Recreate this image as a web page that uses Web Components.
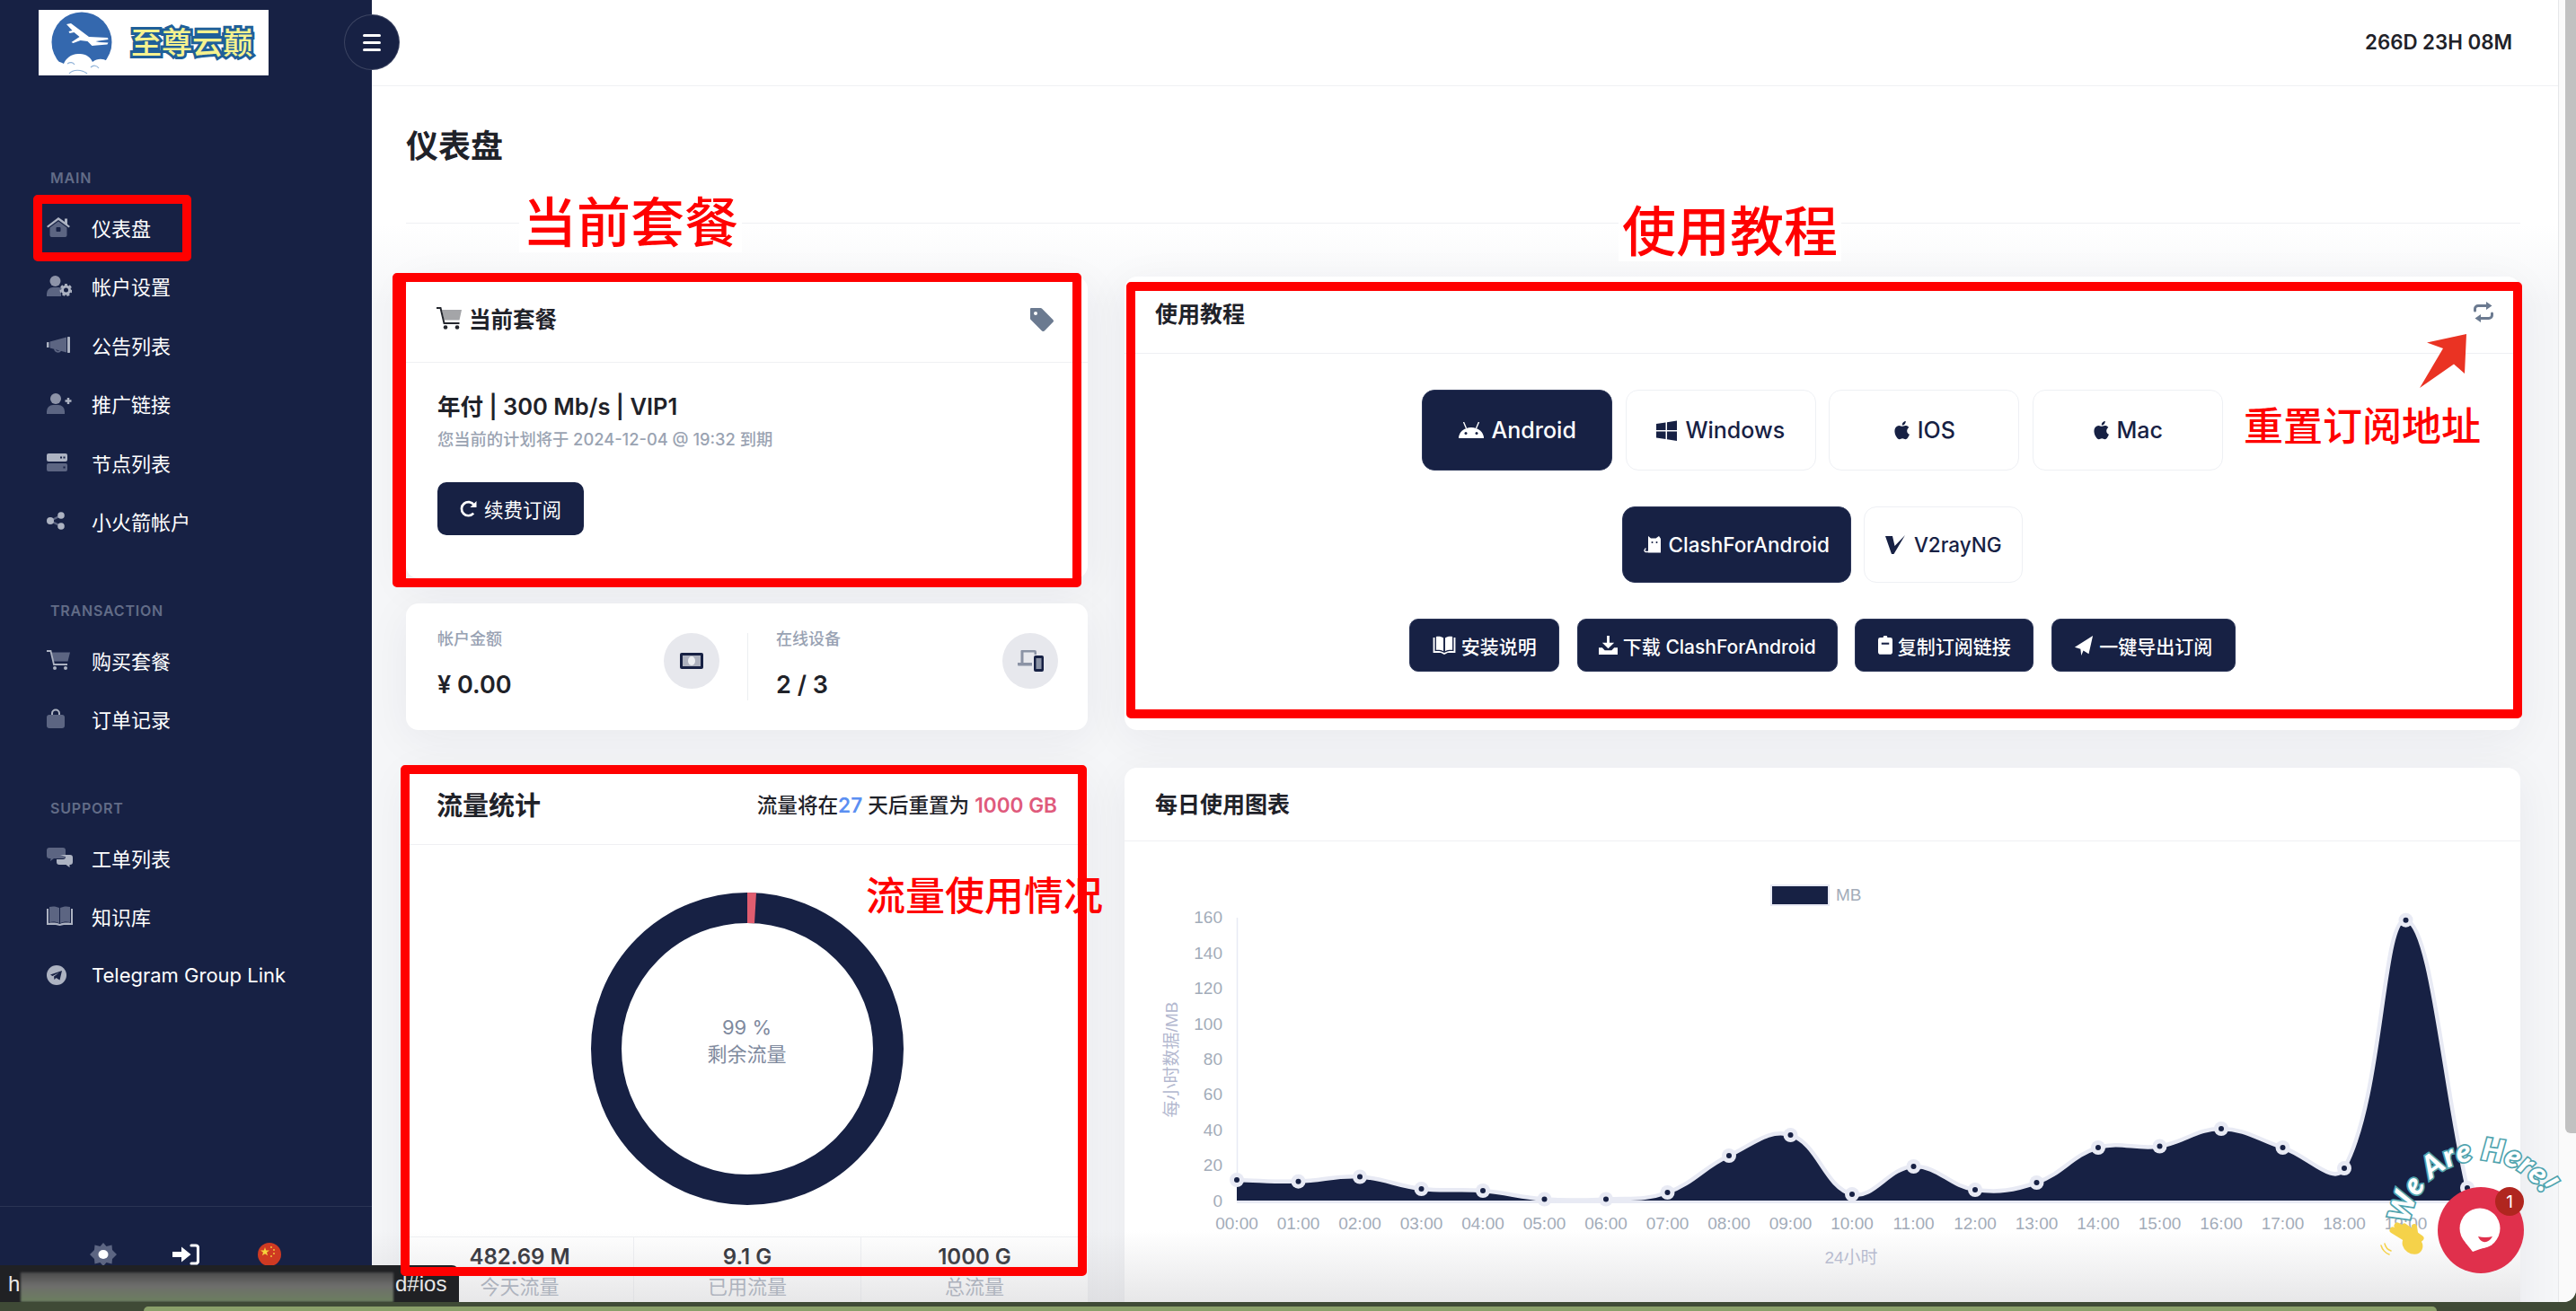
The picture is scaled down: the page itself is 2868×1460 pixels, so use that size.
<!DOCTYPE html>
<html lang="zh">
<head>
<meta charset="utf-8">
<title>仪表盘</title>
<style>
  html, body { margin: 0; height: 100%; overflow: hidden; }
  body {
    background: #3f4a36;
    color: #1f2229;
    font-family: Inter, "Noto Sans CJK SC", sans-serif;
  }
</style>
</head>
<body>
<app-window></app-window>
<script>
const NAVY = '#172144';
const LIGHT = '#adb3c2';
const DARK = '#5c6582';

// every icon: [width, height, viewBox, markup]
const ICONS = {
  home: [26, 22, '0 0 26 22', `<path fill="${LIGHT}" d="M13 0l7 5V1.500h3v6.200l3 2.400-1.500 1.500L13 3 1.500 11.600 0 10.100z"/><path fill="${DARK}" d="M3.500 11.500L13 4.500l9.500 7V20a2 2 0 0 1-2 2h-15a2 2 0 0 1-2-2z"/><rect x="10.500" y="11" width="5" height="5" rx="1" fill="${NAVY}"/>`],
  usercog: [28, 23, '0 0 28 23', `<circle cx="9.500" cy="6" r="6" fill="#8d93a8"/><path fill="${DARK}" d="M0 23v-3a7 7 0 0 1 7-7h6a7 7 0 0 1 3 .7V23z"/><circle cx="21.500" cy="16" r="4" fill="none" stroke="${LIGHT}" stroke-width="3"/><circle cx="21.500" cy="16" r="6" fill="none" stroke="${LIGHT}" stroke-width="2" stroke-dasharray="3 2.200"/>`],
  bullhorn: [26, 18, '0 0 26 18', `<rect y="6" width="2.500" height="6" rx=".6" fill="${LIGHT}"/><path fill="${DARK}" d="M3.500 5.500L22 .5v17l-18.500-5z"/><path fill="none" stroke="${DARK}" stroke-width="1.800" d="M9 13.500a3.500 3.500 0 0 0 6.500 1.500"/><rect x="23" width="3" height="18" rx=".8" fill="${LIGHT}"/>`],
  userplus: [28, 23, '0 0 28 23', `<circle cx="10" cy="6" r="6" fill="#8d93a8"/><path fill="${DARK}" d="M0 23v-3a7 7 0 0 1 7-7h6a7 7 0 0 1 7 7v3z"/><path stroke="${LIGHT}" stroke-width="2.500" d="M24 5v7M20.500 8.500h7"/>`],
  server: [23, 20, '0 0 23 20', `<rect width="23" height="9" rx="2" fill="${LIGHT}"/><rect y="11" width="23" height="9" rx="2" fill="${DARK}"/><rect x="15" y="3.500" width="2" height="2" fill="${NAVY}"/><rect x="18.500" y="3.500" width="2" height="2" fill="${NAVY}"/><rect x="18.500" y="14.500" width="2" height="2" fill="${NAVY}"/>`],
  nodes: [20, 20, '0 0 20 20', `<path stroke="${DARK}" stroke-width="2" d="M4 10l12-6M4 10l12 6"/><circle cx="4" cy="10" r="4" fill="${LIGHT}"/><circle cx="16" cy="4" r="3.800" fill="${LIGHT}"/><circle cx="16" cy="16" r="3.800" fill="${LIGHT}"/>`],
  cart: [26, 22, '0 0 26 22', `<path fill="${DARK}" d="M5.500 2.500H26l-2.500 10H7.500z"/><path fill="none" stroke="${LIGHT}" stroke-width="1.800" d="M0 1h4.500l3.500 15h15"/><circle cx="9" cy="20" r="2" fill="${LIGHT}"/><circle cx="21" cy="20" r="2" fill="${LIGHT}"/>`],
  bag: [20, 22, '0 0 20 22', `<path fill="none" stroke="${LIGHT}" stroke-width="2" d="M6 8V5.500a4 4 0 0 1 8 0V8"/><rect y="7" width="20" height="15" rx="3" fill="${DARK}"/>`],
  comments: [29, 22, '0 0 29 22', `<path fill="${DARK}" d="M3 0h15a3 3 0 0 1 3 3v6a3 3 0 0 1-3 3H8l-4 3 .5-3H3a3 3 0 0 1-3-3V3a3 3 0 0 1 3-3z"/><path fill="${LIGHT}" d="M15 8h11a3 3 0 0 1 3 3v5a3 3 0 0 1-3 3h-.500v3l-4-3H14a3 3 0 0 1-3-3v-3h7a3 3 0 0 0 3-3z"/>`],
  book: [29, 22, '0 0 29 22', `<path fill="${DARK}" d="M3 1c4-1 8-.5 11 1v17c-3-1.500-7-2-11-1zM15 2c3-1.500 7-2 11-1v17c-4-1-8-.5-11 1z"/><path fill="${LIGHT}" d="M0 3h2v16c4-.8 9-.5 12.500 1C18 18.500 23 18.200 27 19V3h2v18h-10l-4.500 1-4.500-1H0z"/>`],
  telegram: [22, 22, '0 0 22 22', `<circle cx="11" cy="11" r="11" fill="${LIGHT}"/><path fill="${NAVY}" d="M4 10.500L17 6l-2.500 10.500-4-2.500-2 2-.5-3.500 6-4.500-7.500 4z"/>`],
  sun: [30, 26, '0 0 30 26', `<path fill="${DARK}" d="M15 0l3.500 4 6-1.500.5 5.500 5 5-5 5-.5 5.500-6-1.500L15 26l-3.500-4-6 1.500L5 18l-5-5 5-5 .5-5.500 6 1.500z"/><ellipse cx="15" cy="13" rx="5.500" ry="5" fill="#fff"/>`],
  login: [30, 24, '0 0 30 24', `<path fill="#fff" d="M0 9h10V3.500L20.500 12 10 20.500V15H0a1 1 0 0 1 0-6z" /><path fill="none" stroke="#fff" stroke-width="3.200" stroke-linecap="round" d="M21 2h5a2.500 2.500 0 0 1 2.500 2.500v15A2.500 2.500 0 0 1 26 22h-5"/>`],
  flag: [26, 26, '0 0 26 26', `<circle cx="13" cy="13" r="13" fill="#cf3a22"/><path fill="#f5d23c" d="M8 5l1.200 3.600H13l-3 2.200 1.100 3.500L8 12.200l-3.100 2.100L6 10.800 3 8.600h3.800z"/><circle cx="15" cy="5" r=".9" fill="#f5d23c"/><circle cx="18" cy="8" r=".9" fill="#f5d23c"/><circle cx="18" cy="12" r=".9" fill="#f5d23c"/><circle cx="15" cy="15" r=".9" fill="#f5d23c"/>`],
  headcart: [28, 25, '0 0 28 25', `<path fill="#a4a5a8" d="M6 3h22l-2.500 11.500H8.500z"/><path fill="none" stroke="#24272e" stroke-width="2" d="M0 1h4.500l4 17h17"/><circle cx="10" cy="22.500" r="2.300" fill="#24272e"/><circle cx="23" cy="22.500" r="2.300" fill="#24272e"/>`],
  tag: [26, 26, '0 0 26 26', `<path fill="#6b7a90" d="M1 0h10.500a2 2 0 0 1 1.400.6l12.400 12.400a2 2 0 0 1 0 2.800L15.800 25.400a2 2 0 0 1-2.800 0L.6 13A2 2 0 0 1 0 11.500V1a1 1 0 0 1 1-1z"/><circle cx="6" cy="6" r="2" fill="#fff"/>`],
  redo: [19, 19, '0 0 20 20', `<path fill="none" stroke="#fff" stroke-width="2.800" d="M16 15.500a8 8 0 1 1 .5-10"/><path fill="#fff" d="M19.500 1v7.500H12z"/>`],
  money: [26, 18, '0 0 26 18', `<rect width="26" height="18" rx="2" fill="${NAVY}"/><rect x="3" y="3" width="20" height="12" fill="#aeb2bf"/><ellipse cx="13" cy="9" rx="4" ry="5" fill="#eceef2"/>`],
  devices: [29, 24, '0 0 29 24', `<path fill="#8b93a5" d="M4 0h15a2 2 0 0 1 2 2v3h-2.500V2.500h-12V14H16v3.500H1a1 1 0 0 1-1-1V14h3.500V2A2 2 0 0 1 4 0z"/><rect x="18" y="6" width="11" height="18" rx="2" fill="${NAVY}"/><rect x="20.500" y="9" width="6" height="12" fill="#8b93a5"/>`],
  sync: [22, 23, '0 0 22 23', `<path fill="none" stroke="#6b7a90" stroke-width="3" stroke-linecap="round" d="M1.500 10V8A3.500 3.500 0 0 1 5 4.500h10M20.500 13v2a3.500 3.500 0 0 1-3.500 3.500H7"/><path fill="#6b7a90" d="M14 0l6.500 4.500L14 9zM8 14l-6.500 4.500L8 23z"/>`],
  android: [28, 18, '0 0 28 18', `<path fill="#fff" d="M0 18a14 12 0 0 1 28 0z"/><circle cx="8" cy="12.500" r="1.500" fill="${NAVY}"/><circle cx="20" cy="12.500" r="1.500" fill="${NAVY}"/><path stroke="#fff" stroke-width="1.400" d="M5.500 0l3 7M22.500 0l-3 7"/>`],
  windows: [23, 23, '0 0 23 23', `<path fill="${NAVY}" d="M0 4l10.500-1.500V11H0zM12 2.300L23 .5V11H12zM0 12.500h10.500V21L0 19.500zM12 12.500h11V23l-11-1.800z"/>`],
  apple: [18, 23, '3.500 1.500 18 21.500', `<path fill="${NAVY}" d="M18.700 12.600c0-2.600 2.100-3.800 2.200-3.900-1.200-1.800-3.100-2-3.700-2-1.600-.2-3.100.9-3.900.9-.8 0-2-.9-3.300-.9-1.700 0-3.300 1-4.200 2.500-1.800 3.100-.5 7.700 1.300 10.200.9 1.200 1.900 2.600 3.200 2.500 1.300 0 1.800-.8 3.300-.8 1.600 0 2 .8 3.300.8 1.400 0 2.300-1.200 3.100-2.500 1-1.400 1.400-2.800 1.400-2.900-.1 0-2.700-1-2.700-4zM16.200 5c.7-.9 1.200-2 1-3.200-1 0-2.200.7-2.900 1.500-.6.700-1.200 1.900-1 3 1.100.1 2.200-.5 2.900-1.300z"/>`],
  cat: [19, 19, '0 0 19 19', `<path fill="#fff" d="M5 3V0l3 2.500h5.500L17 0l2 3v15.500H5z"/><path fill="none" stroke="#fff" stroke-width="1.300" d="M5 17.500H2.500a1.500 1.500 0 0 1-1.200-2.400l1-1.600"/><circle cx="9.500" cy="7" r="1" fill="${NAVY}"/><circle cx="14.500" cy="7" r="1" fill="${NAVY}"/>`],
  v2ray: [23, 22, '0 0 23 22', `<path fill="${NAVY}" d="M0 1h8l2.500 11L22 0 9.500 21H7z"/>`],
  openbook: [26, 21, '0 0 26 22', `<path fill="#fff" d="M0 2h2v16c4-.5 8 0 11 2 3-2 7-2.500 11-2V2h2v18h-9l-4 2-4-2H0zM3.500 1C7 .5 10 1 12 2.500v15.500C10 16.800 7 16.300 3.500 16.500zM22.500 1C19 .5 16 1 14 2.500v15.500c2-1.200 5-1.700 8.500-1.500z"/>`],
  download: [21, 21, '0 0 22 22', `<path fill="#fff" d="M9.500 0h3v8H18l-7 7-7-7h5.500zM0 14h4l3 3h8l3-3h4v8H0z"/>`],
  clip: [16, 21, '0 0 17 22', `<path fill="#fff" d="M6 2a2.500 2.500 0 0 1 5 0h3.500A2.500 2.500 0 0 1 17 4.500V19a3 3 0 0 1-3 3H3a3 3 0 0 1-3-3V4.500A2.500 2.500 0 0 1 2.500 2z"/><rect x="4" y="8" width="9" height="2.200" fill="${NAVY}"/>`],
  plane: [22, 22, '0 0 22 24', `<path fill="#fff" d="M22 0L17 22 10.500 18 8 24l-1-8L0 14z"/>`],
};

class UiIcon extends HTMLElement {
  constructor() {
    super();
    this.attachShadow({ mode: 'open' });
  }

  connectedCallback() {
    const [w, h, box, inner] = ICONS[this.getAttribute('name')];
    this.shadowRoot.innerHTML = `
      <style>:host { display: inline-flex; flex: none; } svg { display: block; }</style>
      <svg width="${w}" height="${h}" viewBox="${box}">${inner}</svg>`;
  }
}

class NavItem extends HTMLElement {
  constructor() {
    super();
    this.attachShadow({ mode: 'open' });
  }

  connectedCallback() {
    this.shadowRoot.innerHTML = `
      <style>
        :host { display: flex; align-items: center; height: 65.500px; padding-left: 52px; color: #fff; font-size: 22px; }
        .slot { width: 50px; display: flex; align-items: center; }
      </style>
      <span class="slot"><ui-icon name="${this.getAttribute('icon')}"></ui-icon></span><slot></slot>`;
  }
}

class NavSection extends HTMLElement {
  constructor() {
    super();
    this.attachShadow({ mode: 'open' });
  }

  connectedCallback() {
    this.shadowRoot.innerHTML = `
      <style>
        :host { display: block; margin-bottom: 55px; }
        h6 { margin: 0 0 10px 56px; height: 24px; line-height: 24px; font-size: 16px; font-weight: 600; letter-spacing: .8px; color: #626c87; }
      </style>
      <h6>${this.getAttribute('label')}</h6><slot></slot>`;
  }
}

class SideBar extends HTMLElement {
  constructor() {
    super();
    this.attachShadow({ mode: 'open' }).innerHTML = `
      <style>
        :host { display: flex; flex-direction: column; flex: none; width: 414px; background: ${NAVY}; }
        .logo { display: flex; align-items: center; width: 256px; height: 73px; margin: 11px 0 102px 43px; background: #fff; overflow: hidden; }
        .logo svg { flex: none; margin-left: 14px; }
        .logo span {
          margin-left: 21px; font-size: 34px; line-height: 73px; font-weight: 500; color: #f6f28e; white-space: nowrap;
          -webkit-text-stroke: 6px #1f5f99; paint-order: stroke fill;
        }
        footer { margin-top: auto; height: 107px; border-top: 1px solid rgba(255,255,255,.09); display: grid; grid-template-columns: 92.500px 92.500px 92.500px; justify-content: center; justify-items: center; align-items: center; box-sizing: border-box; }
      </style>
      <div class="logo">
        <svg width="68" height="73" viewBox="0 0 68 73">
          <circle cx="34" cy="36" r="33.500" fill="#3468ae"/>
          <path fill="#fff" d="M17 16l5-1 20 15 21 1 .5 2-14 2 4 1 10 .5-1 2-12 1-5 .5-5-5-8-1-8 3-2-1 9-6-6-5-5 1-1-2 4-1z"/>
          <path fill="#fff" d="M0 73V59c6-3 10-1 14 1 2-6 9-12 18-11 7 0 12 4 14 9 5-4 12-4 16-1l6 3v13z"/>
          <path fill="none" stroke="#8fb2d8" stroke-width="1.200" d="M20 71c4-5 14-5 20 0M44 64c3-3 7-2 9 1M18 60c3-2 6-2 8 1"/>
        </svg>
        <span>至尊云巅</span>
      </div>
      <nav-section label="MAIN">
        <nav-item icon="home">仪表盘</nav-item>
        <nav-item icon="usercog">帐户设置</nav-item>
        <nav-item icon="bullhorn">公告列表</nav-item>
        <nav-item icon="userplus">推广链接</nav-item>
        <nav-item icon="server">节点列表</nav-item>
        <nav-item icon="nodes">小火箭帐户</nav-item>
      </nav-section>
      <nav-section label="TRANSACTION">
        <nav-item icon="cart">购买套餐</nav-item>
        <nav-item icon="bag">订单记录</nav-item>
      </nav-section>
      <nav-section label="SUPPORT">
        <nav-item icon="comments">工单列表</nav-item>
        <nav-item icon="book">知识库</nav-item>
        <nav-item icon="telegram">Telegram Group Link</nav-item>
      </nav-section>
      <footer>
        <ui-icon name="sun"></ui-icon>
        <ui-icon name="login"></ui-icon>
        <ui-icon name="flag"></ui-icon>
      </footer>`;
  }
}

class TopBar extends HTMLElement {
  constructor() {
    super();
    this.attachShadow({ mode: 'open' }).innerHTML = `
      <style>
        :host { display: flex; align-items: center; justify-content: flex-end; position: relative; height: 96px; box-sizing: border-box; padding: 0 51px 2px 0; background: #fff; border-bottom: 1px solid #f0f1f4; font-size: 22.300px; font-weight: 600; }
        button { position: absolute; left: -31px; top: 16px; width: 62px; height: 62px; padding: 0; border-radius: 50%; border: 1px solid rgba(255,255,255,.16); background: ${NAVY}; display: grid; place-content: center; gap: 5px; }
        i { display: block; width: 20px; height: 3px; border-radius: 2px; background: #fff; }
      </style>
      <button><i></i><i></i><i></i></button>
      <span>266D 23H 08M</span>`;
  }
}

class UiCard extends HTMLElement {
  constructor() {
    super();
    this.attachShadow({ mode: 'open' }).innerHTML = `
      <style>
        :host { display: flex; flex-direction: column; background: #fff; border-radius: 14px; box-shadow: 0 10px 50px rgba(30,40,70,.06); overflow: hidden; }
        header { display: flex; align-items: center; justify-content: space-between; height: var(--head, 86px); box-sizing: border-box; padding: 0 var(--head-right, 34px) 0 34px; border-bottom: 1px solid #eff0f3; flex: none; }
        :host([bare]) header { display: none; }
      </style>
      <header><slot name="title"></slot><slot name="action"></slot></header>
      <slot></slot>`;
  }
}

class PlanCard extends HTMLElement {
  constructor() {
    super();
    this.attachShadow({ mode: 'open' }).innerHTML = `
      <style>
        :host { display: block; }
        ui-card { height: 336px; --head: 96px; --head-right: 38px; }
        .title { display: flex; align-items: center; gap: 8px; font-size: 24.500px; font-weight: 600; margin-top: -2px; }
        .body { padding: 30px 35px; }
        h3 { margin: 0; font-size: 25.500px; line-height: 38px; font-weight: 600; }
        p { margin: 0 0 31px; font-size: 18.300px; line-height: 34px; color: #9aa3b2; font-weight: 500; }
        button { display: inline-flex; align-items: center; gap: 8px; height: 59px; width: 163px; justify-content: center; border: 0; border-radius: 10px; background: ${NAVY}; color: #fff; font: inherit; font-size: 21.500px; }
      </style>
      <ui-card>
        <span class="title" slot="title"><ui-icon name="headcart"></ui-icon>当前套餐</span>
        <ui-icon name="tag" slot="action"></ui-icon>
        <div class="body">
          <h3>年付 | 300 Mb/s | VIP1</h3>
          <p>您当前的计划将于 2024-12-04 @ 19:32 到期</p>
          <button><ui-icon name="redo"></ui-icon>续费订阅</button>
        </div>
      </ui-card>`;
  }
}

class StatBox extends HTMLElement {
  constructor() {
    super();
    this.attachShadow({ mode: 'open' });
  }

  connectedCallback() {
    this.shadowRoot.innerHTML = `
      <style>
        :host { display: flex; justify-content: space-between; flex: 1; }
        .label { font-size: 18px; line-height: 22px; color: #98a2b3; font-weight: 500; margin-top: -4px; }
        .value { font-size: 27px; line-height: 36px; font-weight: 600; margin-top: 22px; }
        .round { width: 62px; height: 62px; border-radius: 50%; background: #e7e8ed; display: grid; place-items: center; }
      </style>
      <div><div class="label">${this.getAttribute('label')}</div><div class="value">${this.getAttribute('value')}</div></div>
      <div class="round"><ui-icon name="${this.getAttribute('icon')}"></ui-icon></div>`;
  }
}

class StatsCard extends HTMLElement {
  constructor() {
    super();
    this.attachShadow({ mode: 'open' }).innerHTML = `
      <style>
        :host { display: block; }
        ui-card { height: 141px; }
        .row { display: flex; padding: 33px 33px 0 35px; }
        .rule { width: 1px; height: 75px; background: #eceef1; margin: 0 31px; flex: none; }
      </style>
      <ui-card bare>
        <div class="row">
          <stat-box label="帐户金额" value="¥ 0.00" icon="money"></stat-box>
          <span class="rule"></span>
          <stat-box label="在线设备" value="2 / 3" icon="devices"></stat-box>
        </div>
      </ui-card>`;
  }
}

class TrafficCard extends HTMLElement {
  constructor() {
    super();
    this.attachShadow({ mode: 'open' }).innerHTML = `
      <style>
        :host { display: block; }
        ui-card { --head: 86px; height: 640px; }
        .title { font-size: 29px; font-weight: 600; margin-top: -5px; }
        .reset { font-size: 22.600px; font-weight: 500; white-space: nowrap; margin-top: -4px; }
        .blue { color: #5b8ff2; font-weight: 600; } .pink { color: #df5a7c; font-weight: 600; }
        .donut { display: grid; place-items: center; height: 436px; border-bottom: 1px solid #eff0f3; flex: none; }
        .donut > * { grid-area: 1 / 1; }
        svg { display: block; margin-top: 17px; }
        .mid { text-align: center; color: #7f8a9e; font-size: 22px; line-height: 30px; margin-top: 0; }
        .cols { display: grid; grid-template-columns: 253px 253px 253px; text-align: center; }
        .cols > div { padding-top: 8px; border-left: 1px solid #eff0f3; height: 100px; }
        .cols > div:first-child { border-left: 0; }
        b { display: block; font-size: 24px; line-height: 32px; font-weight: 600; margin-top: -2px; }
        span.sub { display: block; font-size: 22px; line-height: 32px; margin-top: 1px; color: #9aa3b2; }
      </style>
      <ui-card>
        <span class="title" slot="title">流量统计</span>
        <span class="reset" slot="action">流量将在<span class="blue">27</span> 天后重置为 <span class="pink">1000 GB</span></span>
        <div class="donut">
          <svg width="348" height="348" viewBox="0 0 348 348">
            <circle cx="174" cy="174" r="157" fill="none" stroke="${NAVY}" stroke-width="34"/>
            <path fill="#e05d6f" d="M174 0A174 174 0 0 1 184 .3L182 34.200A140 140 0 0 0 174 34z"/>
          </svg>
          <div class="mid">99 %<br>剩余流量</div>
        </div>
        <div class="cols">
          <div><b>482.69 M</b><span class="sub">今天流量</span></div>
          <div><b>9.1 G</b><span class="sub">已用流量</span></div>
          <div><b>1000 G</b><span class="sub">总流量</span></div>
        </div>
      </ui-card>`;
  }
}

class TabButton extends HTMLElement {
  constructor() {
    super();
    this.attachShadow({ mode: 'open' });
  }

  connectedCallback() {
    this.shadowRoot.innerHTML = `
      <style>
        :host { display: inline-flex; align-items: center; justify-content: center; gap: 9px; box-sizing: border-box; border: 1px solid #eef0f4; border-radius: 14px; color: ${NAVY}; font-weight: 500; background: #fff; }
        :host([active]) { background: ${NAVY}; color: #fff; border-color: #2b3558; }
      </style>
      <ui-icon name="${this.getAttribute('icon')}"></ui-icon><slot></slot>`;
  }
}

class TutorialCard extends HTMLElement {
  constructor() {
    super();
    this.attachShadow({ mode: 'open' }).innerHTML = `
      <style>
        :host { display: block; height: 100%; }
        ui-card { height: 100%; }
        .title { font-size: 25px; font-weight: 600; margin-top: -6px; }
        .sync { margin-top: -6px; margin-right: -4px; }
        .rows { display: flex; flex-direction: column; align-items: center; gap: 40px; padding-top: 40px; }
        .row { display: flex; justify-content: center; gap: 14.500px; }
        .one tab-button { width: 212px; height: 90px; font-size: 25px; }
        .two tab-button { height: 85px; font-size: 22.500px; }
        .two .clash { width: 255px; }
        .two .v2 { width: 177px; }
        .three { gap: 19.500px; }
        .three tab-button { height: 59px; font-size: 21px; border-radius: 10px; gap: 6px; }
      </style>
      <ui-card>
        <span class="title" slot="title">使用教程</span>
        <ui-icon class="sync" name="sync" slot="action"></ui-icon>
        <div class="rows">
          <div class="row one">
            <tab-button active icon="android">Android</tab-button>
            <tab-button icon="windows">Windows</tab-button>
            <tab-button icon="apple">IOS</tab-button>
            <tab-button icon="apple">Mac</tab-button>
          </div>
          <div class="row two">
            <tab-button class="clash" active icon="cat">ClashForAndroid</tab-button>
            <tab-button class="v2" icon="v2ray">V2rayNG</tab-button>
          </div>
          <div class="row three">
            <tab-button active icon="openbook" style="width:167px">安装说明</tab-button>
            <tab-button active icon="download" style="width:290px">下载 ClashForAndroid</tab-button>
            <tab-button active icon="clip" style="width:199px">复制订阅链接</tab-button>
            <tab-button active icon="plane" style="width:205px">一键导出订阅</tab-button>
          </div>
        </div>
      </ui-card>`;
  }
}

class UsageChart extends HTMLElement {
  constructor() {
    super();
    this.attachShadow({ mode: 'open' });
    this.X0 = 1377;
    this.STEP = 68.5;
    this.BASE = 1337.5;
    // y of each hourly point, in page pixels
    this.YS = [1314, 1315.7, 1310.5, 1324, 1326, 1335.5, 1335.5, 1328, 1287, 1264, 1330, 1299, 1325, 1317, 1278, 1276.5, 1257, 1278, 1301, 1024.7, 1323];
  }

  // same curve as a bezier line chart with tension .4
  curve(points) {
    const T = 0.4;
    const CP = points.map((p, i) => {
      const PREV = points[i - 1] || p;
      const NEXT = points[i + 1] || p;
      const D01 = Math.hypot(p.x - PREV.x, p.y - PREV.y);
      const D12 = Math.hypot(NEXT.x - p.x, NEXT.y - p.y);
      const SUM = D01 + D12 || 1;
      const DX = NEXT.x - PREV.x;
      const DY = NEXT.y - PREV.y;
      return {
        inX: p.x - T * (D01 / SUM) * DX,
        inY: p.y - T * (D01 / SUM) * DY,
        outX: p.x + T * (D12 / SUM) * DX,
        outY: p.y + T * (D12 / SUM) * DY
      };
    });
    let d = `M${points[0].x} ${points[0].y}`;
    for (let i = 1; i < points.length; i++) {
      d += `C${CP[i - 1].outX} ${CP[i - 1].outY} ${CP[i].inX} ${CP[i].inY} ${points[i].x} ${points[i].y}`;
    }
    return d;
  }

  connectedCallback() {
    const POINTS = this.YS.map((y, i) => ({ x: this.X0 + i * this.STEP, y }));
    const LINE = this.curve(POINTS);
    const LAST = POINTS[POINTS.length - 1].x;
    let yLabels = '';
    for (let v = 0; v <= 160; v += 20) {
      yLabels += `<text x="1361" y="${this.BASE - v * 1.97 + 6}" text-anchor="end">${v}</text>`;
    }
    const xLabels = POINTS.map((p, i) => `<text x="${p.x}" y="1369" text-anchor="middle">${String(i).padStart(2, '0')}:00</text>`).join('');
    const DOTS = POINTS.map((p) => `<circle cx="${p.x}" cy="${p.y}" r="8" fill="#e8eaf4"/><circle cx="${p.x}" cy="${p.y}" r="3" fill="${NAVY}"/>`).join('');
    this.shadowRoot.innerHTML = `
      <style>
        :host { display: block; }
        svg { display: block; font-family: "Liberation Sans", "Noto Sans CJK SC", sans-serif; font-size: 19px; fill: #a3acb9; }
      </style>
      <svg width="1554" height="513" viewBox="1252 937 1554 513">
        <rect x="1972" y="986" width="64" height="22" fill="${NAVY}" stroke="#e8eaf4" stroke-width="2"/>
        <text x="2044" y="1003">MB</text>
        <path d="M1377.500 1022V1338" stroke="#e8eaf4" stroke-width="1.500"/>
        ${yLabels}${xLabels}
        <text x="2061" y="1407" text-anchor="middle" fill="#b3b8cf">24小时</text>
        <text transform="translate(1311 1180) rotate(-90)" text-anchor="middle" fill="#b3b8cf">每小时数据/MB</text>
        <path d="${LINE}L${LAST} ${this.BASE}L${this.X0} ${this.BASE}Z" fill="${NAVY}"/>
        <path d="M${this.X0} ${this.BASE + 1}H${LAST}" stroke="#e8eaf4" stroke-width="3"/>
        <path d="${LINE}" fill="none" stroke="#e8eaf4" stroke-width="4.500"/>
        ${DOTS}
      </svg>`;
  }
}

class DailyCard extends HTMLElement {
  constructor() {
    super();
    this.attachShadow({ mode: 'open' }).innerHTML = `
      <style>
        :host { display: block; }
        ui-card { --head: 82px; height: 640px; }
        .title { font-size: 25px; font-weight: 600; margin-top: -3px; }
      </style>
      <ui-card>
        <span class="title" slot="title">每日使用图表</span>
        <usage-chart></usage-chart>
      </ui-card>`;
  }
}

class DashPage extends HTMLElement {
  constructor() {
    super();
    this.attachShadow({ mode: 'open' }).innerHTML = `
      <style>
        :host { display: block; padding: 0 42px 0 38px; }
        h1 { margin: 0; height: 153px; box-sizing: border-box; padding-top: 44px; line-height: 46px; font-size: 36px; font-weight: 600; border-bottom: 1px solid #eff0f3; }
        .grid { display: grid; grid-template-columns: 759px 1554px; column-gap: 41px; row-gap: 42px; grid-template-rows: 505px auto; margin-top: 59px; }
        .left { display: flex; flex-direction: column; gap: 28px; }
      </style>
      <h1>仪表盘</h1>
      <div class="grid">
        <div class="left"><plan-card></plan-card><stats-card></stats-card></div>
        <tutorial-card></tutorial-card>
        <traffic-card></traffic-card>
        <daily-card></daily-card>
      </div>`;
  }
}

// hand-drawn marks on top of the screenshot: red frames, captions, arrow
class MarkFrame extends HTMLElement {
  constructor() {
    super();
    this.attachShadow({ mode: 'open' }).innerHTML = `
      <style>:host { display: block; position: absolute; box-sizing: border-box; border: 10px solid #f00; border-radius: 5px; }</style>`;
  }
}

class MarkText extends HTMLElement {
  constructor() {
    super();
    this.attachShadow({ mode: 'open' }).innerHTML = `
      <style>:host { display: block; position: absolute; color: #f00; white-space: nowrap; line-height: 1.1; font-weight: 500; }</style><slot></slot>`;
  }
}

class ChatWidget extends HTMLElement {
  constructor() {
    super();
    this.attachShadow({ mode: 'open' }).innerHTML = `
      <style>
        :host { display: block; position: absolute; left: 2640px; top: 1260px; }
        svg { display: block; overflow: visible; }
        .curve { font-family: Lato, sans-serif; font-size: 34px; font-weight: 900; font-style: italic; fill: #fff; stroke: #4fa3ae; stroke-width: 3.500px; paint-order: stroke fill; }
      </style>
      <svg width="220" height="170" viewBox="2640 1260 220 170">
        <path id="arc" fill="none" d="M2682.400 1363.600A80 80 0 0 1 2831.300 1332"/>
        <text class="curve"><textPath href="#arc" textLength="198" lengthAdjust="spacing">We Are Here!</textPath></text>
        <g fill="none" stroke="#f5d24a" stroke-linecap="round">
          <g stroke-width="7">
            <path d="M2690 1386L2664 1370M2693 1381L2669 1365M2695 1379L2677 1366"/>
          </g>
          <path stroke-width="6" d="M2691 1386L2688 1366"/>
          <path stroke-width="1.500" d="M2655 1385c1 4 4 7 7 8M2651 1387c1 4 5 9 9 10"/>
        </g>
        <ellipse cx="2686" cy="1386" rx="12" ry="10" transform="rotate(35 2686 1386)" fill="#f5d24a"/>
        <circle cx="2762" cy="1370" r="48" fill="#e0304c"/>
        <path fill="#fff" d="M2745 1384L2753 1394L2775 1386Z"/>
        <circle cx="2761" cy="1368" r="22.500" fill="#fff"/>
        <path fill="#e0304c" d="M2759 1377Q2767 1379 2775 1377Q2771 1384 2765 1383Q2761 1382 2759 1377Z"/>
        <circle cx="2794" cy="1338" r="16" fill="#b0261f"/>
        <text x="2794" y="1345" text-anchor="middle" fill="#fff" font-family="Inter, sans-serif" font-size="19">1</text>
      </svg>`;
  }
}

class StatusBubble extends HTMLElement {
  constructor() {
    super();
    this.attachShadow({ mode: 'open' }).innerHTML = `
      <style>
        :host { display: flex; position: absolute; left: 0; top: 1409px; width: 511px; height: 41px; box-sizing: border-box; padding-left: 9px; background: #202124; border-top-right-radius: 8px; color: #e8e8e8; font: 24px/42px "Liberation Sans", sans-serif; overflow: hidden; }
        i { flex: none; width: 415px; margin-top: 8px; background: linear-gradient(180deg, #4b4b4c, #6e6e6c 45%, #6c7f5f); filter: blur(1px); }
        span { width: 14px; flex: none; overflow: hidden; }
      </style>
      <span>h</span><i></i><b style="font-weight:400;margin-left:2px">d#ios</b>`;
  }
}

class AppWindow extends HTMLElement {
  constructor() {
    super();
    this.attachShadow({ mode: 'open' }).innerHTML = `
      <style>
        :host { display: block; position: relative; height: 1460px; }
        .win { display: flex; height: 1450px; background: #f5f6f8; border-bottom-right-radius: 14px; overflow: hidden; }
        main { flex: 1; min-width: 0; background: linear-gradient(180deg, #fff 250px, #f5f6f8 340px); }
        .track { flex: none; width: 20px; box-sizing: border-box; background: #fafafa; border-left: 1px solid #e6e7e9; padding-left: 7px; }
        .thumb { height: 1262px; background: #c1c1c1; border-radius: 0 0 0 6px; }
        .fade { position: absolute; left: 414px; top: 1370px; width: 2392px; height: 80px; background: linear-gradient(180deg, rgba(210,210,214,0), rgba(205,205,208,.48)); }
        .ground { height: 10px; background: #3f4a36; position: relative; }
        .ground::after { content: ""; position: absolute; left: 160px; right: 155px; top: 5px; bottom: 0; border-radius: 10px 10px 0 0; background: #8aa06a; }
        .big { font-size: 60px; background: #fff; padding: 0 4px; }
        .mid { font-size: 44px; }
        .arrow { position: absolute; left: 0; top: 0; pointer-events: none; }
      </style>
      <div class="win">
        <side-bar></side-bar>
        <main><top-bar></top-bar><dash-page></dash-page></main>
        <div class="track"><div class="thumb"></div></div>
      </div>
      <div class="ground"></div>
      <div class="fade"></div>
      <status-bubble></status-bubble>

      <mark-frame style="left:37px;top:217px;width:176px;height:74px"></mark-frame>
      <mark-frame style="left:437px;top:304px;width:767px;height:350px;border-left-width:15px"></mark-frame>
      <mark-frame style="left:1254px;top:314px;width:1554px;height:486px"></mark-frame>
      <mark-frame style="left:446px;top:852px;width:764px;height:569px"></mark-frame>

      <mark-text class="big" style="left:578px;top:215px">当前套餐</mark-text>
      <mark-text class="big" style="left:1802px;top:225px">使用教程</mark-text>
      <mark-text class="mid" style="left:2498px;top:451px;background:#fff">重置订阅地址</mark-text>
      <mark-text class="mid" style="left:964px;top:974px">流量使用情况</mark-text>
      <svg class="arrow" width="2868" height="1460" viewBox="0 0 2868 1460">
        <path fill="#ea3323" d="M2746 372L2702 381.500L2720 388L2694 432L2732 405.600L2744 416Z"/>
      </svg>

      <chat-widget></chat-widget>`;
  }
}

customElements.define('ui-icon', UiIcon);
customElements.define('nav-item', NavItem);
customElements.define('nav-section', NavSection);
customElements.define('side-bar', SideBar);
customElements.define('top-bar', TopBar);
customElements.define('ui-card', UiCard);
customElements.define('plan-card', PlanCard);
customElements.define('stat-box', StatBox);
customElements.define('stats-card', StatsCard);
customElements.define('traffic-card', TrafficCard);
customElements.define('tab-button', TabButton);
customElements.define('tutorial-card', TutorialCard);
customElements.define('usage-chart', UsageChart);
customElements.define('daily-card', DailyCard);
customElements.define('dash-page', DashPage);
customElements.define('mark-frame', MarkFrame);
customElements.define('mark-text', MarkText);
customElements.define('chat-widget', ChatWidget);
customElements.define('status-bubble', StatusBubble);
customElements.define('app-window', AppWindow);
</script>
</body>
</html>
